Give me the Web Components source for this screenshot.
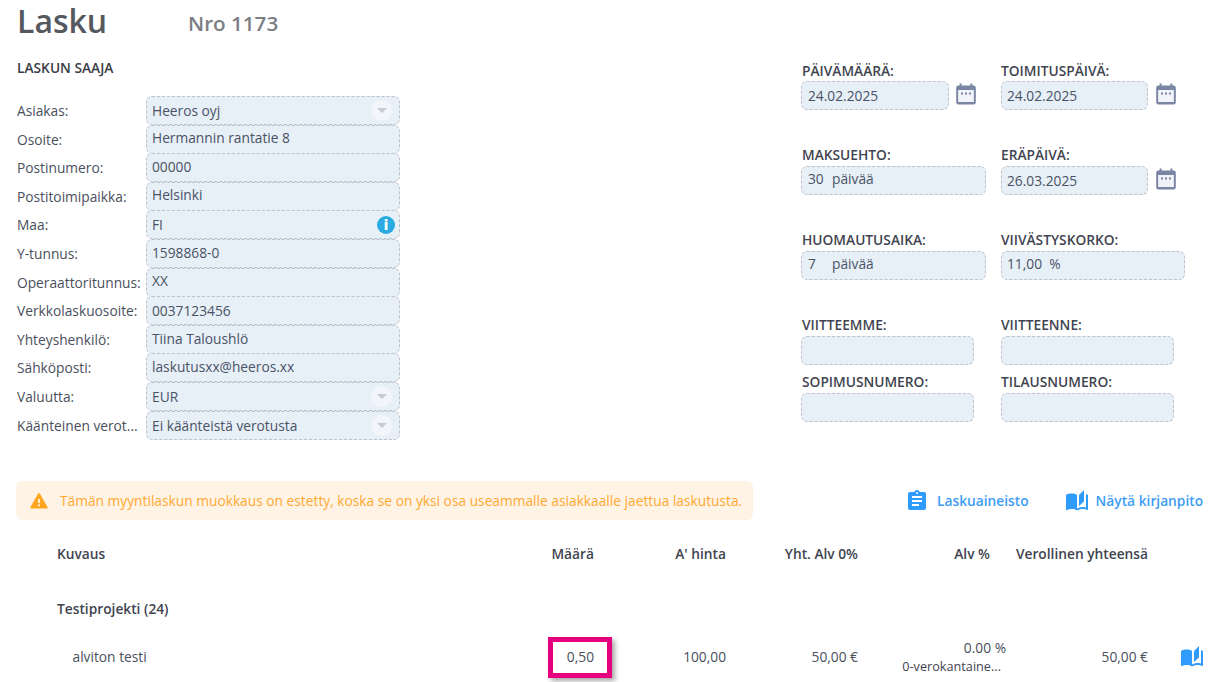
<!DOCTYPE html>
<html lang="fi"><head><meta charset="utf-8"><title>Lasku</title>
<style>
html,body{margin:0;padding:0;background:#fff;overflow:hidden;height:682px}
body{font:13.76px/20px "Open Sans",sans-serif;color:#4a4f5c}
</style></head><body>
<invoice-page></invoice-page>
<script>
const P={
 book:'M19 1L14 6V17L19 12.5V1M21 5V18.5C19.9 18.15 18.7 18 17.5 18C15.8 18 13.35 18.65 12 19.5V6C10.55 4.9 8.45 4.5 6.5 4.5C4.55 4.5 2.45 4.9 1 6V20.65C1 20.9 1.25 21.15 1.5 21.15C1.6 21.15 1.65 21.1 1.75 21.1C3.1 20.45 5.05 20 6.5 20C8.45 20 10.55 20.4 12 21.5C13.35 20.65 15.8 20 17.5 20C19.15 20 20.85 20.3 22.25 21.05C22.35 21.1 22.4 21.1 22.5 21.1C22.75 21.1 23 20.85 23 20.6V6C22.4 5.55 21.75 5.25 21 5Z',
 clip:'M17,9H7V7H17M17,13H7V11H17M14,17H7V15H14M12,3A1,1 0 0,1 13,4A1,1 0 0,1 12,5A1,1 0 0,1 11,4A1,1 0 0,1 12,3M19,3H14.82C14.4,1.84 13.3,1 12,1C10.7,1 9.6,1.84 9.18,3H5A2,2 0 0,0 3,5V19A2,2 0 0,0 5,21H19A2,2 0 0,0 21,19V5A2,2 0 0,0 19,3Z'
};
const svg=(d,s,c)=>`<svg width="${s}" height="${s}" viewBox="0 0 24 24" fill="${c}" style="display:block;flex:none"><path d="${d}"/></svg>`;
const alertIcon=`<svg width="20" height="20" viewBox="0 0 24 24" style="display:block;flex:none"><path d="M2.6 20H21.4L12 3.6Z" fill="#ffa51f" stroke="#ffa51f" stroke-width="2.2" stroke-linejoin="round"/><rect x="10.9" y="9.5" width="2.2" height="5" fill="#fff3e6"/><rect x="10.9" y="16" width="2.2" height="2.2" fill="#fff3e6"/></svg>`;
const calendar=`<svg width="20" height="22" viewBox="0 0 20 22" style="display:block;flex:none;margin-top:-4px"><path fill="#7a84a3" fill-rule="evenodd" d="M3.6 0.5h2V2.5h8.8V0.5h2V2.5h1.2A2.2 2.2 0 0 1 19.8 4.7V19.3A2.2 2.2 0 0 1 17.6 21.5H2.4A2.2 2.2 0 0 1 .2 19.3V4.7A2.2 2.2 0 0 1 2.4 2.5H3.6ZM2.4 7V18.5A.6.6 0 0 0 3 19.1H17A.6.6 0 0 0 17.6 18.5V7Z"/><rect x="2.4" y="7" width="15.2" height="12" fill="#f1f3f8"/><rect x="5" y="9.5" width="2" height="2" fill="#7a84a3"/><rect x="9" y="9.5" width="2" height="2" fill="#7a84a3"/><rect x="13" y="9.5" width="2" height="2" fill="#7a84a3"/></svg>`;

class FieldBox extends HTMLElement{
 static get observedAttributes(){return['select','info']}
 constructor(){super();this.attachShadow({mode:'open'}).innerHTML=`<style>
 :host{display:flex;box-sizing:border-box;align-items:center;height:var(--h,29px);width:var(--w,100%);background:#e7eff7;border:1px dashed #bcc1cb;border-radius:6px;padding:0 5px 0 var(--pl,5px);color:#4a5366;font-size:13.76px;white-space:pre}
 .t{flex:1;position:relative;top:var(--dy,0px);min-width:0}
 .chev{width:21px;height:21px;border-radius:50%;background:#f2f5f9;display:flex;align-items:center;justify-content:center;flex:none;margin-right:2px}
 .chev i{display:block;width:0;height:0;border:5px solid transparent;border-top:5px solid #c6cad2;border-bottom:0}
 .info{width:18px;height:18px;border-radius:50%;background:#29abe2;color:#fff;flex:none;font:800 14px/18px "Open Sans",sans-serif;text-align:center;margin-right:-1px}
 </style><span class="t"><slot></slot></span>`;}
 attributeChangedCallback(n){
  const r=this.shadowRoot;
  if(n=='select'&&!r.querySelector('.chev')){const e=document.createElement('span');e.className='chev';e.innerHTML='<i></i>';r.append(e)}
  if(n=='info'&&!r.querySelector('.info')){const e=document.createElement('span');e.className='info';e.textContent='i';r.append(e)}
 }
}
customElements.define('field-box',FieldBox);

class FormRow extends HTMLElement{
 constructor(){super();this.attachShadow({mode:'open'}).innerHTML=`<style>
 :host{display:grid;grid-template-columns:129px 254px;align-items:center;height:28.6px}
 .l{color:#4a4f5c;white-space:nowrap;padding-top:1px}
 field-box{--h:29px}
 </style><span class="l"></span><field-box><slot></slot></field-box>`;}
 connectedCallback(){
  const f=this.shadowRoot.querySelector('field-box');
  this.shadowRoot.querySelector('.l').textContent=this.getAttribute('label');
  if(this.hasAttribute('select')){f.setAttribute('select','');f.style.setProperty('--dy','.5px')}
  else if(this.hasAttribute('info'))f.setAttribute('info','');
  else f.style.setProperty('--dy',this.getAttribute('dy')||'-.5px');
 }
}
customElements.define('form-row',FormRow);

class DateField extends HTMLElement{
 constructor(){super();this.attachShadow({mode:'open'}).innerHTML=`<style>
 :host{display:block}
 .l{font-weight:600;line-height:19px;height:19px;margin-bottom:1px;color:#3f4450;white-space:nowrap;position:relative;top:var(--ly,0px);padding-left:var(--lx,0px)}
 .r{display:flex;align-items:center;gap:var(--cg,7px)}
 </style><div class="l"></div><div class="r"><field-box><slot></slot></field-box></div>`;}
 connectedCallback(){
  const s=this.shadowRoot,f=s.querySelector('field-box');
  s.querySelector('.l').textContent=this.getAttribute('label');
  f.style.setProperty('--w',this.getAttribute('fw')+'px');
  if(this.hasAttribute('cal')&&!s.querySelector('svg'))s.querySelector('.r').insertAdjacentHTML('beforeend',calendar);
 }
}
customElements.define('date-field',DateField);

class AlertBar extends HTMLElement{
 constructor(){super();this.attachShadow({mode:'open'}).innerHTML=`<style>
 :host{display:flex;align-items:center;box-sizing:border-box;width:737px;height:39px;background:#fff3e6;border-radius:6px;padding:0 11px 0 13px;gap:11px;color:#ffa930;white-space:nowrap}
 </style>${alertIcon}<span><slot></slot></span>`;}
}
customElements.define('alert-bar',AlertBar);

class ActionLink extends HTMLElement{
 constructor(){super();this.attachShadow({mode:'open'}).innerHTML=`<style>
 :host{display:flex;align-items:center;color:#3d9df6;font-weight:600;white-space:nowrap}
 </style><span id="i" style="display:block"></span><slot></slot>`;}
 connectedCallback(){
  const k=this.getAttribute('icon'),i=this.shadowRoot.getElementById('i');
  i.innerHTML=svg(P[k],24,'#2f9bfb');
  i.style.marginRight=k=='clip'?'8px':'7px';
 }
}
customElements.define('action-link',ActionLink);

class TableGrid extends HTMLElement{
 constructor(){super();this.attachShadow({mode:'open'}).innerHTML=`<style>
 :host{display:block;margin-left:57px;width:1147px;color:#4a4f5c;white-space:nowrap}
 .g{display:grid;grid-template-columns:405px 132px 132px 132px 132px 158px 56px;align-items:center}
 .g>*{text-align:right}.g>:first-child{text-align:left}
 .h{font-weight:600;color:#3f4450;height:20px;line-height:20px}
 .p{font-weight:600;color:#3f4450;margin-top:35px;height:20px;line-height:20px}
 .r{margin-top:17px;height:42px}
 .r>:first-child{padding-left:15.5px}
 .qty{justify-self:end;box-sizing:border-box;width:64px;height:41px;margin-right:-18px;border:5px solid #e6007e;box-shadow:3px 3px 5px rgba(0,0,0,.35);display:flex;align-items:center;justify-content:flex-end;padding-right:13px}
 .tax{line-height:18px;align-self:stretch;padding-top:3px}
 .tax .a{margin-right:-16px}
 .tax .s{font-size:12.7px;color:#3f4450;margin-right:-11px;line-height:18px}
 .bk{justify-self:end}
 </style>
 <div class="g h"><span>Kuvaus</span><span>Määrä</span><span>A' hinta</span><span>Yht. Alv 0%</span><span>Alv %</span><span>Verollinen yhteensä</span><span></span></div>
 <div class="p">Testiprojekti (24)</div>
 <div class="g r"><span>alviton testi</span><span class="qty">0,50</span><span>100,00</span><span>50,00 €</span>
  <div class="tax"><div class="a">0.00 %</div><div class="s">0-verokantaine...</div></div>
  <span>50,00 €</span><span class="bk">${svg(P.book,24,'#2f9bfb')}</span></div>`;}
}
customElements.define('table-grid',TableGrid);

class InvoicePage extends HTMLElement{
 constructor(){super();this.attachShadow({mode:'open'}).innerHTML=`<style>
 :host{display:block;width:1226px;height:682px;overflow:hidden}
 .head{display:flex;align-items:baseline;padding-left:17px;height:43px}
 h1{margin:0;font-size:32px;font-weight:600;line-height:44px;margin-top:-1px;color:#55585f;width:171px}
 .nro{font-size:20.64px;font-weight:600;color:#7b7e84;position:relative;top:-2px}
 .top{display:flex;height:437px}
 .left{width:801px;padding-left:17px;box-sizing:border-box;flex:none}
 .sec{font-size:13.76px;font-weight:600;color:#3a3d45;height:20px;line-height:20px;margin-top:15px;margin-bottom:18px}
 .gap{display:inline-block;width:24px}
 .right{padding-top:18px;display:grid;grid-template-columns:200px 200px;grid-auto-rows:min-content}
 .right date-field{margin-bottom:36px}
 .right date-field:nth-child(odd){--lx:1px;--pl:6px}
 .right date-field:nth-child(even){--cg:8px}
 .right .tight{margin-bottom:8px}
 .right .lo{--ly:-1px}
 .n{--dy:-1.5px}
 .bar{display:flex;align-items:center;padding-left:16px;height:39px;margin-top:1px}
 .links{display:flex;gap:36px;margin-left:152px}
 table-grid{margin-top:24px}
 </style>
 <div class="head"><h1>Lasku</h1><span class="nro">Nro 1173</span></div>
 <div class="top">
  <div class="left"><div class="sec">LASKUN SAAJA</div>
   <form-row label="Asiakas:" select>Heeros oyj</form-row>
   <form-row label="Osoite:" dy="-1.5px">Hermannin rantatie 8</form-row>
   <form-row label="Postinumero:">00000</form-row>
   <form-row label="Postitoimipaikka:" dy="-1.5px">Helsinki</form-row>
   <form-row label="Maa:" info>FI</form-row>
   <form-row label="Y-tunnus:">1598868-0</form-row>
   <form-row label="Operaattoritunnus:" dy="-1.5px">XX</form-row>
   <form-row label="Verkkolaskuosoite:" dy="0px">0037123456</form-row>
   <form-row label="Yhteyshenkilö:">Tiina Taloushlö</form-row>
   <form-row label="Sähköposti:" dy="-.5px">laskutusxx@heeros.xx</form-row>
   <form-row label="Valuutta:" select>EUR</form-row>
   <form-row label="Käänteinen verot..." select>Ei käänteistä verotusta</form-row>
  </div>
  <div class="right">
   <date-field label="PÄIVÄMÄÄRÄ:" fw="148" cal>24.02.2025</date-field>
   <date-field label="TOIMITUSPÄIVÄ:" fw="147" cal>24.02.2025</date-field>
   <date-field class="n lo" label="MAKSUEHTO:" fw="185"><span class="gap">30</span>päivää</date-field>
   <date-field class="lo" label="ERÄPÄIVÄ:" fw="147" cal>26.03.2025</date-field>
   <date-field class="n lo" label="HUOMAUTUSAIKA:" fw="185"><span class="gap">7</span>päivää</date-field>
   <date-field class="n lo" label="VIIVÄSTYSKORKO:" fw="184">11,00  %</date-field>
   <date-field class="tight lo" label="VIITTEEMME:" fw="173"></date-field>
   <date-field class="tight lo" label="VIITTEENNE:" fw="173"></date-field>
   <date-field class="lo" label="SOPIMUSNUMERO:" fw="173"></date-field>
   <date-field class="lo" label="TILAUSNUMERO:" fw="173"></date-field>
  </div>
 </div>
 <div class="bar"><alert-bar>Tämän myyntilaskun muokkaus on estetty, koska se on yksi osa useammalle asiakkaalle jaettua laskutusta.</alert-bar>
  <div class="links"><action-link icon="clip">Laskuaineisto</action-link><action-link icon="book">Näytä kirjanpito</action-link></div></div>
 <table-grid></table-grid>`;}
}
customElements.define('invoice-page',InvoicePage);
</script>
</body></html>
